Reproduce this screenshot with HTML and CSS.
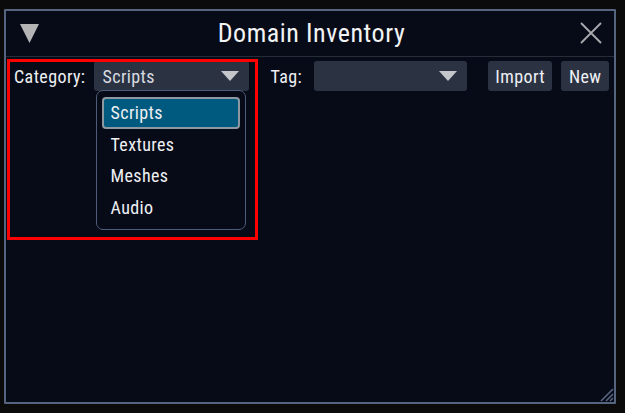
FILE: index.html
```html
<!DOCTYPE html>
<html>
<head>
<meta charset="utf-8">
<link rel="stylesheet" href="styles.css">
</head>
<body>
<div class="window">
  <div class="titlebar">
    <svg class="collapse" width="19" height="19" viewBox="0 0 19 19"><polygon points="0,0 19,0 9.5,19" fill="#b4b4b4"/></svg>
    <div class="title">Domain Inventory</div>
    <svg class="close" width="22" height="22" viewBox="0 0 22 22"><path d="M1 1 L21 21 M21 1 L1 21" stroke="#a9abaf" stroke-width="1.8" fill="none"/></svg>
  </div>
  <div class="toolbar">
    <span class="label">Category:</span>
    <div class="select cat">
      <span class="value">Scripts</span>
      <svg class="arrow" width="18" height="10" viewBox="0 0 18 10"><polygon points="0,0 18,0 9,10" fill="#c4c6ca"/></svg>
      <ul class="popup">
        <li class="item selected">Scripts</li>
        <li class="item">Textures</li>
        <li class="item">Meshes</li>
        <li class="item">Audio</li>
      </ul>
    </div>
    <span class="label tag">Tag:</span>
    <div class="select tagsel">
      <span class="value"></span>
      <svg class="arrow" width="18" height="10" viewBox="0 0 18 10"><polygon points="0,0 18,0 9,10" fill="#c4c6ca"/></svg>
    </div>
    <button class="btn import">Import</button>
    <button class="btn new">New</button>
  </div>
  <div class="highlight"></div>
  <svg class="grip" width="16" height="16" viewBox="0 0 16 16"><path d="M15 3 L3 15 M15 8 L8 15 M15 12 L12 15" stroke="#5a6884" stroke-width="1.5"/></svg>
</div>
</body>
</html>
```
FILE: styles.css
```css
* { box-sizing: border-box; }
html, body { margin: 0; padding: 0; }
body {
  width: 625px;
  height: 413px;
  background: #0b0b0c;
  font-family: "Roboto Condensed", Roboto, "Liberation Sans", sans-serif;
  overflow: hidden;
  padding: 9px 0 0 4px;
}
.window {
  position: relative;
  width: 612px;
  height: 395px;
  background: #070b18;
  border: 2px solid #56657f;
  border-radius: 1px;
}
.titlebar {
  height: 46px;
  display: flex;
  align-items: center;
  padding: 0 12px 0 14px;
  border-bottom: 1px solid #262c3a;
}
.title {
  flex: 1;
  text-align: center;
  color: #f2f3f5;
  font-size: 26px;
  letter-spacing: 0.55px;
  margin-left: 4px;
  margin-top: -2px;
}
.close { margin-top: -2px; }
.toolbar {
  display: flex;
  align-items: center;
  height: 30px;
  margin-top: 4px;
  padding-left: 8px;
  color: #eef0f3;
  font-size: 18px;
  letter-spacing: 0.4px;
}
.label { margin-right: 9px; }
.label.tag { margin-left: 21px; margin-right: 12px; }
.select {
  position: relative;
  height: 30px;
  background: #2b3343;
  border-radius: 3px;
  display: flex;
  align-items: center;
  justify-content: space-between;
  padding: 0 10px 0 8px;
}
.select.cat { width: 155px; }
.select.tagsel { width: 153px; }
.value { color: #d8dbe1; }
.popup {
  position: absolute;
  left: 2px;
  top: 29px;
  width: 150px;
  height: 140px;
  margin: 0;
  padding: 6px 5px;
  list-style: none;
  background: #070b18;
  border: 1.5px solid #4d5c78;
  border-radius: 7px;
  z-index: 2;
}
.item {
  height: 31.5px;
  display: flex;
  align-items: center;
  padding-left: 8px;
  color: #eef0f3;
}
.item.selected {
  background: #005a80;
  border: 2px solid #8e98a3;
  border-radius: 4px;
  padding-left: 6px;
}
.btn {
  height: 30px;
  background: #2b3343;
  border: none;
  border-radius: 3px;
  color: #eef0f3;
  font-family: inherit;
  font-size: 18px;
  letter-spacing: 0.4px;
  padding: 0;
}
.btn.import { width: 64px; margin-left: 21px; }
.btn.new { width: 48px; margin-left: 9px; }
.highlight {
  position: absolute;
  left: 1px;
  top: 48px;
  width: 251px;
  height: 181px;
  border: 3px solid #ff0000;
  z-index: 3;
}
.grip {
  position: absolute;
  right: 0px;
  bottom: 0px;
}
```
